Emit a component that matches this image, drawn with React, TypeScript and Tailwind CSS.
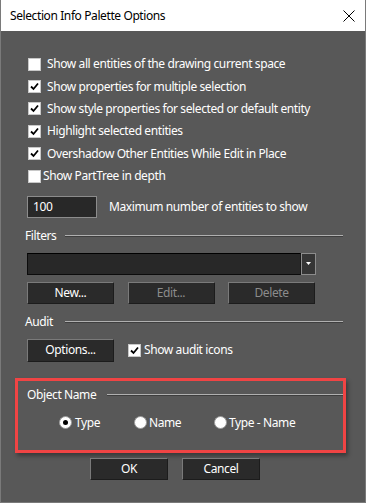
import React from 'react';

const FONT = { fontFamily: '"Noto Sans", "Segoe UI", Arial, sans-serif', letterSpacing: '-0.4px' };

function Check({ checked }: { checked?: boolean }) {
  return (
    <span className="w-[13px] h-[13px] shrink-0 bg-white border border-[#c8c8c8] flex items-center justify-center">
      {checked && (
        <svg width="9" height="9" viewBox="0 0 9 9">
          <path d="M1 4.5 L3.5 7 L8 1.5" fill="none" stroke="#000" strokeWidth="1.8" />
        </svg>
      )}
    </span>
  );
}

function Radio({ checked }: { checked?: boolean }) {
  return (
    <span className="w-[13px] h-[13px] shrink-0 rounded-full bg-white border border-[#9a9a9a] flex items-center justify-center">
      {checked && <span className="w-[5px] h-[5px] rounded-full bg-black" />}
    </span>
  );
}

function Btn({ label, disabled, w = 'w-[87px]' }: { label: string; disabled?: boolean; w?: string }) {
  return (
    <div className={`${w} h-[22px] border border-t-[#7a7a7a] border-l-[#7a7a7a] border-r-[#1c1c1c] border-b-[#1c1c1c] bg-[#2a2a2a] flex items-center justify-center`}>
      <span className={`text-[12px] ${disabled ? 'text-[#8c8c8c]' : 'text-white'}`}>{label}</span>
    </div>
  );
}

function Heading({ label, labelW }: { label: string; labelW: string }) {
  return (
    <div className="h-[16px] flex items-center">
      <span className={`${labelW} text-[12px] text-white leading-none`}>{label}</span>
      <div className="flex-1 h-[2px] border-t border-t-[#b0b0b0] border-b border-b-[#3e3e3e]" />
    </div>
  );
}

const ROWS = [
  { label: 'Show all entities of the drawing current space', checked: false },
  { label: 'Show properties for multiple selection', checked: true },
  { label: 'Show style properties for selected or default entity', checked: true },
  { label: 'Highlight selected entities', checked: true },
  { label: 'Overshadow Other Entities While Edit in Place', checked: true },
];

export default function App() {
  return (
    <div className="w-[366px] h-[503px] overflow-hidden bg-[#585858] border-x border-b border-[#7a7a7a]" style={FONT}>
      {/* title bar */}
      <div className="h-[31px] bg-white flex items-center justify-between pl-[9px] pr-[9px]">
        <span className="text-[12px] text-black">Selection Info Palette Options</span>
        <svg width="12" height="12" viewBox="0 0 12 12" className="mr-[1px]">
          <path d="M0.5 0.5 L11.5 11.5 M11.5 0.5 L0.5 11.5" stroke="#000" strokeWidth="1" />
        </svg>
      </div>

      {/* options */}
      <div className="pt-[22px] pl-[27px]">
        {ROWS.map((r) => (
          <div key={r.label} className="h-[22.4px] flex items-center gap-[6px]">
            <Check checked={r.checked} />
            <span className="text-[12px] text-white">{r.label}</span>
          </div>
        ))}
        <div className="h-[22.4px] flex items-center gap-[2px]">
          <Check />
          <span className="text-[12px] text-white">Show PartTree in depth</span>
        </div>
      </div>

      <div className="mt-[8.6px] pl-[26px] flex items-center gap-[12px]">
        <div className="w-[70px] h-[22px] bg-[#282828] border border-[#8c8c8c] flex items-center pl-[5px]">
          <span className="text-[12px] text-white">100</span>
        </div>
        <span className="text-[12px] text-white">Maximum number of entities to show</span>
      </div>

      <div className="mt-[10px] pl-[24px] pr-[22px]">
        <Heading label="Filters" labelW="w-[40px]" />
      </div>

      <div className="mt-[9px] pl-[26px] flex">
        <div className="w-[274px] h-[22px] bg-[#282828] border border-[#0c0c0c] border-t-[#000] border-r-[#1a1a1a]" />
        <div className="w-[15px] h-[22px] bg-[#353535] border border-[#8c8c8c] flex items-center justify-center">
          <svg width="5" height="3" viewBox="0 0 5 3">
            <path d="M0 0 H5 L2.5 3 Z" fill="#fff" />
          </svg>
        </div>
      </div>

      <div className="mt-[7px] pl-[26px] flex gap-[13.5px]">
        <Btn label="New..." />
        <Btn label="Edit..." disabled />
        <Btn label="Delete" disabled />
      </div>

      <div className="mt-[10px] pl-[24px] pr-[22px]">
        <Heading label="Audit" labelW="w-[40px]" />
      </div>

      <div className="mt-[9px] pl-[26px] flex items-center">
        <div className="w-[87px] h-[23px] border border-t-[#7a7a7a] border-l-[#7a7a7a] border-r-[#1c1c1c] border-b-[#1c1c1c] bg-[#2a2a2a] flex items-center justify-center">
          <span className="text-[12px] text-white">Options...</span>
        </div>
        <div className="ml-[14px] flex items-center gap-[3px]">
          <Check checked />
          <span className="text-[12px] text-white">Show audit icons</span>
        </div>
      </div>

      {/* highlighted group */}
      <div className="mt-[16px] ml-[14px] w-[331px] h-[75px] border-[3px] border-[#f04444] shadow-[2px_3px_4px_rgba(0,0,0,0.35)] pt-[6px] pl-[9px]">
        <Heading label="Object Name" labelW="w-[80px]" />
        <div className="mt-[12px] h-[16px] flex items-center pl-[32px]">
          <div className="w-[75px] flex items-center gap-[3px]">
            <Radio checked />
            <span className="text-[12px] text-white">Type</span>
          </div>
          <div className="w-[80px] flex items-center gap-[2px]">
            <Radio />
            <span className="text-[12px] text-white">Name</span>
          </div>
          <div className="flex items-center gap-[2px]">
            <Radio />
            <span className="text-[12px] text-white">Type - Name</span>
          </div>
        </div>
      </div>

      <div className="mt-[5px] pl-[89px] flex gap-[14px]">
        <Btn label="OK" w="w-[78px]" />
        <Btn label="Cancel" w="w-[78px]" />
      </div>
    </div>
  );
}
